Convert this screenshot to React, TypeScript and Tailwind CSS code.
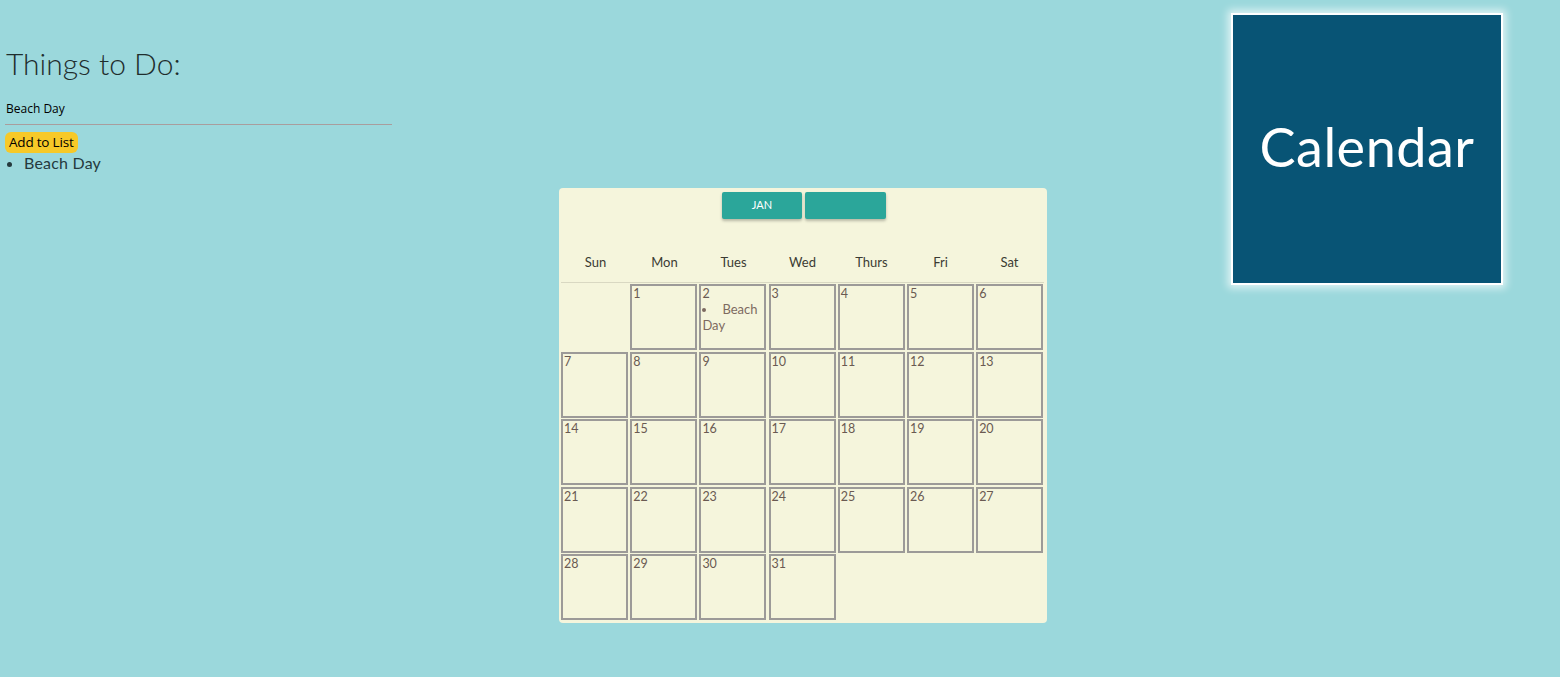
import React from "react";

const days = ["Sun", "Mon", "Tues", "Wed", "Thurs", "Fri", "Sat"];

export default function App() {
  const cells: (number | null)[] = [null];
  for (let i = 1; i <= 31; i++) cells.push(i);

  return (
    <div
      className="w-[1560px] h-[677px] bg-[#9bd8dc] flex overflow-hidden"
      style={{ fontFamily: "Lato, 'Noto Sans', sans-serif" }}
    >
      {/* Left todo column */}
      <div className="w-[392px] shrink-0 pl-[5px] pt-[44px]">
        <h1 className="text-[30px] font-light text-[#1f2d2d] leading-[38px] pl-[1px]">
          Things to Do:
        </h1>
        <div className="mt-[19px] w-[387px] border-b border-[#a99d9d] pb-[7px]">
          <div
            className="text-[12px] text-black leading-[16px] pl-[1px]"
            style={{ fontFamily: "'Open Sans', 'Noto Sans', sans-serif" }}
          >
            Beach Day
          </div>
        </div>
        <button
          className="mt-[7px] bg-[#f7c928] rounded-[6px] px-[4px] h-[21px] text-[13.5px] leading-[21px] text-black tracking-[-0.2px]"
          style={{ fontFamily: "'Open Sans', 'Noto Sans', sans-serif" }}
        >
          Add to List
        </button>
        <ul className="list-disc pl-[19px] mt-0">
          <li className="text-[16px] text-[#253a3e] leading-[20px] tracking-[0.2px]">Beach Day</li>
        </ul>
      </div>

      {/* Calendar */}
      <div className="ml-[167px] mt-[188px] w-[488px] h-[435px] shrink-0 bg-[#f5f5dc] rounded-[4px] px-[2px]">
        <div className="flex justify-center gap-[3px] pt-[4px] pl-[2px]">
          <button className="w-[80px] h-[27px] bg-[#2ba69a] text-white text-[11px] rounded-[2px] shadow-[0_2px_3px_rgba(0,0,0,0.25)]">
            JAN
          </button>
          <button className="w-[81px] h-[27px] bg-[#2ba69a] rounded-[2px] shadow-[0_2px_3px_rgba(0,0,0,0.25)]"></button>
        </div>
        <div className="mt-[26px] grid grid-cols-7 w-[483px] h-[38px] border-b border-[#d9d8c2] items-center">
          {days.map((d) => (
            <div key={d} className="text-center text-[13px] text-[#3b3b33] leading-[16px] -mt-[3px]">
              {d}
            </div>
          ))}
        </div>
        <div className="mt-[1px] grid grid-cols-[repeat(7,67px)] gap-x-[2.2px] gap-y-[1.5px]">
          {cells.map((c, i) =>
            c === null ? (
              <div key={i} className="h-[66px]" />
            ) : (
              <div
                key={i}
                className="h-[66px] border-2 border-[#9c9a98] text-[12.5px] leading-[15px] text-[#6a5a52] pl-[1px] overflow-hidden"
              >
                <div>{c}</div>
                {c === 2 && (
                  <ul className="list-disc list-inside text-[13px] leading-[16px] text-[#7d6a60]">
                    <li>
                      <span className="pl-[2px]">Beach</span> Day
                    </li>
                  </ul>
                )}
              </div>
            )
          )}
        </div>
      </div>

      {/* Logo */}
      <div className="ml-auto mr-[57px] mt-[13px] shrink-0">
        <div className="w-[272px] h-[272px] bg-[#085475] border-2 border-white shadow-[0_0_8px_3px_rgba(255,255,255,0.7)] flex items-center justify-center">
          <span className="text-white text-[54px] leading-none -mt-[4px] tracking-[0.5px]" style={{ fontFamily: "Lato, 'Noto Sans', sans-serif" }}>
            Calendar
          </span>
        </div>
      </div>
    </div>
  );
}
